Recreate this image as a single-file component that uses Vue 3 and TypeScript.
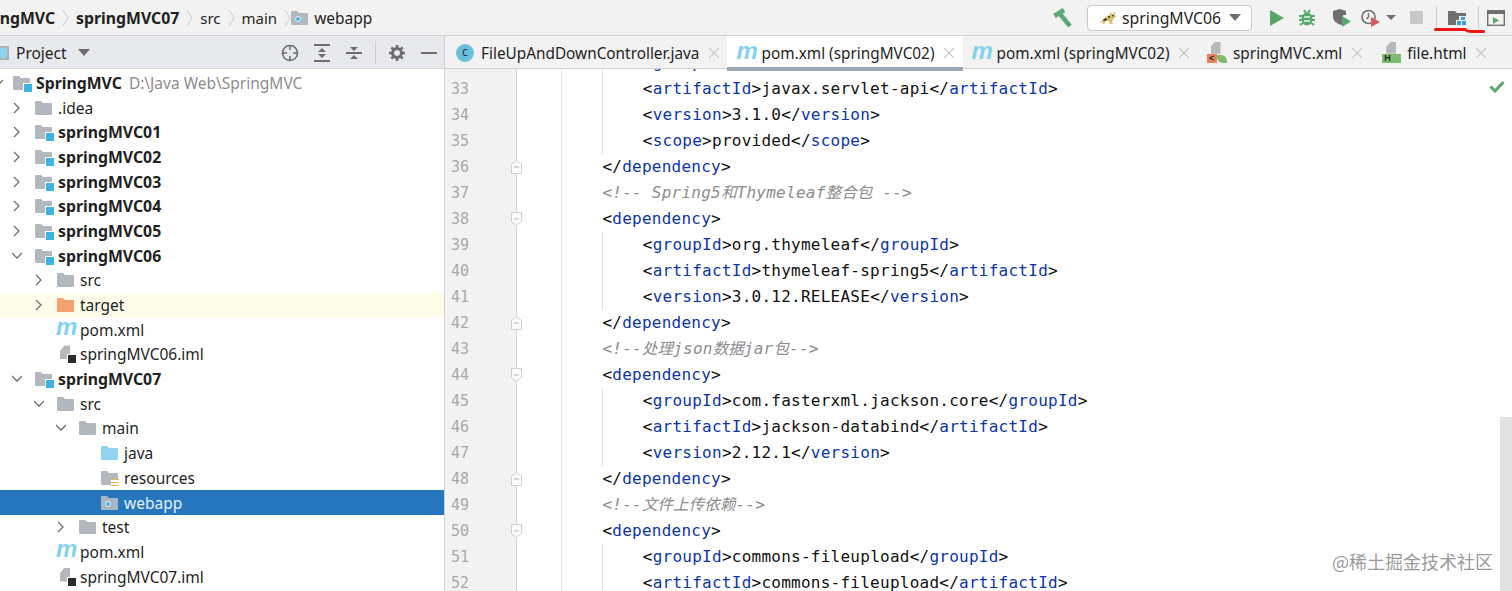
<template>
  <div class="ide">
    <svg class="defs" aria-hidden="true">
      <symbol id="folder" viewBox="0 0 17 14"><path d="M0 1a1 1 0 0 1 1-1h5l2 2h8a1 1 0 0 1 1 1v10a1 1 0 0 1-1 1H1a1 1 0 0 1-1-1z" fill="currentColor" /></symbol>
      <symbol id="chevron" viewBox="0 0 7 18"><path d="M1 1l5 8-5 8" fill="none" stroke="#cdcdcd" stroke-width="1" /></symbol>
    </svg>

    <header class="navbar">
      <nav class="crumbs">
        <span class="crumb first"><b>springMVC</b></span><svg class="sep"><use href="#chevron" /></svg>
        <span class="crumb"><b>springMVC07</b></span><svg class="sep"><use href="#chevron" /></svg>
        <span class="crumb">src</span><svg class="sep"><use href="#chevron" /></svg>
        <span class="crumb">main</span><svg class="sep"><use href="#chevron" /></svg>
        <span class="crumb with-icon">
          <span class="ficon crumb-folder"><svg width="17" height="14"><use href="#folder" /></svg><i class="dot" /></span>
          webapp
        </span>
      </nav>
      <div class="actions">
        <svg class="hammer" width="20" height="20" viewBox="0 0 20 20"><path d="M1.500 8 11 2" stroke="#5fa873" stroke-width="5" fill="none" /><path d="M7 6l10 12" stroke="#5fa873" stroke-width="4.500" fill="none" /></svg>
        <div class="run-config">
          <svg width="18" height="14" viewBox="0 0 18 14"><path d="M0 13 4 8l4-3 3-1 0-3 2 2 3-2 0 3 1 2-3 2-1 3 1 2-3 0-1-3-3 0-2 3-2-1 1-2z" fill="#d9bf6a" /><path d="M4 9l3-2 1 2-3 1zM9 5l2 0-1 3zM13 4l2 0-1 2z" fill="#2b2b2b" /></svg>
          <span>springMVC06</span>
          <i class="caret" />
        </div>
        <svg class="tool play" width="14" height="16" viewBox="0 0 14 16"><path d="M0 0 14 8 0 16z" fill="#59a869" /></svg>
        <svg class="tool bug" width="18" height="18" viewBox="0 0 18 18"><g stroke="#59a869" stroke-width="2" fill="none"><path d="M1 7h16M1 11h16M2 16l3-2M16 16l-3-2M6 1l2 3M12 1l-2 3" /></g><ellipse cx="9" cy="10" rx="5.500" ry="6.500" fill="#59a869" /><path d="M6 8h6M6 12h6" stroke="#e8f3ea" stroke-width="1.500" /></svg>
        <svg class="tool cover" width="20" height="18" viewBox="0 0 20 18"><path d="M1 2 8 0l6 2v4l-3 0v9l-2 1C4 14 1 12 1 7z" fill="#6e6e6e" /><path d="M10 7l9 5.500-9 5.500z" fill="#59a869" /></svg>
        <svg class="tool prof" width="20" height="18" viewBox="0 0 20 18"><circle cx="7.500" cy="8" r="6.500" fill="none" stroke="#6e6e6e" stroke-width="1.600" /><path d="M7.500 4v4l-2 2" fill="none" stroke="#6e6e6e" stroke-width="1.400" /><path d="M10 8l9 5-9 5z" fill="#db5860" /></svg>
        <i class="caret small" />
        <span class="stop" />
        <i class="tool-sep first-sep" />
        <span class="ps-wrap">
          <svg width="19" height="16" viewBox="0 0 19 16"><path d="M0 1h7l2 2h9v3h-7v4H8v5H0z" fill="#6e6e6e" /><path d="M13 7h4v3h-4zM9 11h4v4H9zM14 11h4v4h-4z" fill="#389fd6" /></svg>
          <svg class="mark" width="51" height="7" viewBox="0 0 51 7"><path d="M1.500 2.500H31Q33 4.500 37 4.500H49.500" fill="none" stroke="#f01414" stroke-width="3" stroke-linecap="round" /></svg>
        </span>
        <i class="tool-sep" />
        <svg class="tool panel" width="18" height="16" viewBox="0 0 18 16"><rect x=".7" y=".7" width="16.600" height="14.600" fill="none" stroke="#6e6e6e" stroke-width="1.400" /><path d="M1 1h16v3H1z" fill="#6e6e6e" /><path d="M6 7l6 3.500L6 14z" fill="#59a869" /></svg>
      </div>
    </header>

    <main class="body">
      <aside class="project">
        <div class="project-head">
          <div class="project-title">
            <i class="view-icon" />
            <span>Project</span>
            <i class="caret" />
          </div>
          <div class="project-tools">
            <svg class="locate" width="18" height="18" viewBox="0 0 18 18"><circle cx="9" cy="9" r="7.500" fill="none" stroke="#6e6e6e" stroke-width="1.600" /><path d="M9 1v5M9 12v5M1 9h5M12 9h5" stroke="#6e6e6e" stroke-width="1.600" /></svg>
            <svg width="16" height="18" viewBox="0 0 16 18"><path d="M0 1h16M0 17h16" stroke="#6e6e6e" stroke-width="2" /><path d="M8 4l4 4H4zM8 14l4-4H4z" fill="#6e6e6e" /></svg>
            <svg width="16" height="18" viewBox="0 0 16 18"><path d="M0 9h16" stroke="#6e6e6e" stroke-width="2" /><path d="M8 7 4 3h8zM8 11l4 4H4z" fill="#6e6e6e" /></svg>
            <i class="tool-sep head-sep" />
            <svg width="16" height="16" viewBox="0 0 16 16"><circle cx="8" cy="8" r="4.500" fill="none" stroke="#6e6e6e" stroke-width="3" /><path d="M8 0v3M8 13v3M0 8h3M13 8h3M2.300 2.300l2 2M11.700 11.700l2 2M13.700 2.300l-2 2M4.300 11.700l-2 2" stroke="#6e6e6e" stroke-width="2.600" /></svg>
            <svg width="16" height="16" viewBox="0 0 16 16"><path d="M0 8h16" stroke="#6e6e6e" stroke-width="2" /></svg>
          </div>
        </div>
        <ul class="tree">
          <li
            v-for="node in tree"
            :key="node.id"
            class="node"
            :class="{ selected: node.selected, ignored: node.kind === 'target' }"
          >
            <span class="arrow" :style="{ marginLeft: 10 + node.depth * 22 + 'px' }">
              <svg v-if="node.open !== undefined" width="10" height="12" viewBox="0 0 10 12">
                <path :d="node.open ? 'M0 3l5 5 5-5' : 'M2 1l5 5-5 5'" fill="none" stroke="#6e6e6e" stroke-width="1.300" />
              </svg>
            </span>
            <span class="ficon" :class="node.kind">
              <template v-if="node.kind === 'pom'"><em class="m">m</em></template>
              <template v-else-if="node.kind === 'iml'"><i class="doc" /><i class="blk" /></template>
              <template v-else>
                <svg width="17" height="14"><use href="#folder" /></svg>
                <i v-if="node.kind === 'module'" class="square" />
                <i v-if="node.kind === 'web'" class="dot" />
                <i v-if="node.kind === 'res'" class="lines" />
              </template>
            </span>
            <span class="label" :class="{ strong: node.kind === 'module' }">{{ node.name }}</span>
            <span v-if="node.path" class="path">{{ node.path }}</span>
          </li>
        </ul>
      </aside>

      <section class="editor">
        <div class="tabs">
          <div v-for="tab in tabs" :key="tab.id" class="tab" :class="{ active: tab.active }">
            <span class="tab-icon" :class="tab.icon">
              <template v-if="tab.icon === 'pom'"><em class="m">m</em></template>
              <template v-else-if="tab.icon === 'cls'">c</template>
              <template v-else-if="tab.icon === 'spring'"><i class="doc" /><i class="band">&lt;</i><i class="leaf" /></template>
              <template v-else><i class="doc" /><i class="band green">H</i></template>
            </span>
            <span>{{ tab.title }}</span>
            <svg class="close" width="10" height="10" viewBox="0 0 10 10"><path d="M0 0l10 10M10 0 0 10" stroke="#c4c4c4" stroke-width="1.200" /></svg>
          </div>
        </div>
        <div class="code">
          <div v-for="line in lines" :key="line.no" class="line">
            <span class="no">{{ line.no }}</span>
            <span class="fold">
              <svg v-if="line.fold" class="fold-mark" width="11" height="14" viewBox="0 0 11 14">
                <path :d="line.fold === 'start' ? 'M.5.5h10v9L5.500 13.500.5 9.500z' : 'M.5 4.500 5.500.5l5 4v9H.5z'" fill="#fafafa" stroke="#cfcfcf" />
                <path d="M3 7h5" stroke="#b5b5b5" />
              </svg>
            </span>
            <span class="src" :class="{ guided: line.guide }" :style="{ paddingLeft: line.indent * 40.4 + 'px' }">
              <span v-for="(tok, i) in line.tokens" :key="i" :class="tok.cls">{{ tok.text }}</span>
            </span>
          </div>
          <svg class="ok" width="16" height="13" viewBox="0 0 16 13"><path d="M1.500 6.500 6 11 14.500 2" fill="none" stroke="#59a869" stroke-width="3" /></svg>
          <div class="thumb" />
          <div class="watermark">@稀土掘金技术社区</div>
        </div>
      </section>
    </main>
  </div>
</template>

<script setup lang="ts">
type Kind = 'module' | 'dir' | 'target' | 'java' | 'res' | 'web' | 'pom' | 'iml'

interface TreeNode {
  id: number
  name: string
  depth: number
  kind: Kind
  open?: boolean
  path?: string
  selected?: boolean
}

const rows: Omit<TreeNode, 'id'>[] = [
  { name: 'SpringMVC', depth: -1, kind: 'module', open: true, path: 'D:\\Java Web\\SpringMVC' },
  { name: '.idea', depth: 0, kind: 'dir', open: false },
  { name: 'springMVC01', depth: 0, kind: 'module', open: false },
  { name: 'springMVC02', depth: 0, kind: 'module', open: false },
  { name: 'springMVC03', depth: 0, kind: 'module', open: false },
  { name: 'springMVC04', depth: 0, kind: 'module', open: false },
  { name: 'springMVC05', depth: 0, kind: 'module', open: false },
  { name: 'springMVC06', depth: 0, kind: 'module', open: true },
  { name: 'src', depth: 1, kind: 'dir', open: false },
  { name: 'target', depth: 1, kind: 'target', open: false },
  { name: 'pom.xml', depth: 1, kind: 'pom' },
  { name: 'springMVC06.iml', depth: 1, kind: 'iml' },
  { name: 'springMVC07', depth: 0, kind: 'module', open: true },
  { name: 'src', depth: 1, kind: 'dir', open: true },
  { name: 'main', depth: 2, kind: 'dir', open: true },
  { name: 'java', depth: 3, kind: 'java' },
  { name: 'resources', depth: 3, kind: 'res' },
  { name: 'webapp', depth: 3, kind: 'web', selected: true },
  { name: 'test', depth: 2, kind: 'dir', open: false },
  { name: 'pom.xml', depth: 1, kind: 'pom' },
  { name: 'springMVC07.iml', depth: 1, kind: 'iml' },
]
const tree: TreeNode[] = rows.map((r, id) => ({ ...r, id }))

const tabs = [
  { id: 1, title: 'FileUpAndDownController.java', icon: 'cls' },
  { id: 2, title: 'pom.xml (springMVC02)', icon: 'pom', active: true },
  { id: 3, title: 'pom.xml (springMVC02)', icon: 'pom' },
  { id: 4, title: 'springMVC.xml', icon: 'spring' },
  { id: 5, title: 'file.html', icon: 'html' },
]

const source: [string, number, string?, boolean?][] = [
  ['<groupId>javax.servlet</groupId>', 2, undefined, true],
  ['<artifactId>javax.servlet-api</artifactId>', 2, undefined, true],
  ['<version>3.1.0</version>', 2, undefined, true],
  ['<scope>provided</scope>', 2, undefined, true],
  ['</dependency>', 1, 'end'],
  ['<!-- Spring5和Thymeleaf整合包 -->', 1],
  ['<dependency>', 1, 'start'],
  ['<groupId>org.thymeleaf</groupId>', 2, undefined, true],
  ['<artifactId>thymeleaf-spring5</artifactId>', 2, undefined, true],
  ['<version>3.0.12.RELEASE</version>', 2, undefined, true],
  ['</dependency>', 1, 'end'],
  ['<!--处理json数据jar包-->', 1],
  ['<dependency>', 1, 'start'],
  ['<groupId>com.fasterxml.jackson.core</groupId>', 2, undefined, true],
  ['<artifactId>jackson-databind</artifactId>', 2, undefined, true],
  ['<version>2.12.1</version>', 2, undefined, true],
  ['</dependency>', 1, 'end'],
  ['<!--文件上传依赖-->', 1],
  ['<dependency>', 1, 'start'],
  ['<groupId>commons-fileupload</groupId>', 2, undefined, true],
  ['<artifactId>commons-fileupload</artifactId>', 2, undefined, true],
]

// 把一行 xml 切成带颜色的片段
const tokenize = (text: string) => {
  if (text.startsWith('<!--')) {
    return text
      .split(/([\u4e00-\u9fff]+)/)
      .filter(Boolean)
      .map(part => ({ text: part, cls: /[\u4e00-\u9fff]/.test(part) ? 'comment cjk' : 'comment' }))
  }
  return text
    .split(/(<\/?|>)/)
    .filter(Boolean)
    .map((part, i, all) => {
      if (part === '<' || part === '</' || part === '>') return { text: part, cls: 'plain' }
      const prev = all[i - 1]
      return { text: part, cls: prev === '<' || prev === '</' ? 'tag' : 'plain' }
    })
}

const lines = source.map(([text, indent, fold, guide], i) => ({
  no: 32 + i,
  indent,
  fold,
  guide,
  tokens: tokenize(text),
}))
</script>

<style scoped>
.ide {
  width: 1512px;
  height: 591px;
  overflow: hidden;
  display: flex;
  flex-direction: column;
  background: #fff;
  color: #1f1f1f;
  font-family: "Noto Sans", "Noto Sans CJK SC", sans-serif;
  font-size: 15.500px;
}
.defs {
  position: absolute;
  width: 0;
  height: 0;
}
i {
  font-style: normal;
}
b,
.label.strong {
  font-weight: 700;
  font-size: 15.800px;
}

/* top bar */
.navbar {
  height: 36px;
  flex: none;
  display: flex;
  align-items: center;
  justify-content: space-between;
  background: #f2f2f2;
  border-bottom: 1px solid #d1d1d1;
  box-sizing: border-box;
}
.crumbs {
  display: flex;
  align-items: center;
  font-size: 15px;
}
.crumb {
  display: flex;
  align-items: center;
  white-space: nowrap;
}
.crumb.first {
  margin-left: -30px;
}
.crumb.with-icon {
  margin-left: -7px;
  font-size: 15.500px;
}
.sep {
  width: 7px;
  height: 18px;
  margin: 0 7px;
}
.crumb-folder {
  margin-right: 5px;
  color: #a7b6c2;
}
.actions {
  display: flex;
  align-items: center;
  padding-right: 7px;
}
.hammer {
  margin-right: 14px;
}
.run-config {
  width: 165px;
  height: 26px;
  box-sizing: border-box;
  display: flex;
  align-items: center;
  padding-left: 11px;
  gap: 5px;
  background: #fff;
  border: 1px solid #c9c9c9;
  border-radius: 4px;
  margin-right: 18px;
  font-size: 15.800px;
}
.caret {
  width: 0;
  height: 0;
  border-left: 6px solid transparent;
  border-right: 6px solid transparent;
  border-top: 7px solid #6e6e6e;
  margin-left: 3px;
}
.caret.small {
  border-left-width: 5px;
  border-right-width: 5px;
  border-top-width: 5px;
  margin-left: 5px;
  margin-right: 14px;
}
.tool.play {
  margin-right: 14px;
}
.tool.bug {
  margin-right: 16px;
}
.tool.cover {
  margin-right: 9px;
}
.stop {
  width: 13px;
  height: 13px;
  background: #c8c8c8;
  margin-right: 13px;
}
.tool-sep {
  width: 1px;
  height: 23px;
  background: #cfcfcf;
}
.ps-wrap {
  position: relative;
  display: flex;
  margin: 0 11px;
}
.mark {
  position: absolute;
  left: -14px;
  top: 17px;
}
.tool.panel {
  margin-left: 8px;
}

.body {
  flex: 1;
  min-height: 0;
  display: flex;
}

/* project panel */
.project {
  width: 445px;
  flex: none;
  border-right: 1px solid #d1d1d1;
  box-sizing: border-box;
  overflow: hidden;
}
.project-head {
  height: 33px;
  padding-top: 1px;
  box-sizing: border-box;
  display: flex;
  align-items: center;
  justify-content: space-between;
  background: #e7e9ed;
  border-bottom: 1px solid #dcdcdc;
}
.project-title {
  display: flex;
  align-items: center;
  gap: 7px;
}
.view-icon {
  width: 9px;
  height: 14px;
  background: #8fd3ef;
  border-top: 2px solid #aeb3ba;
  border-right: 2px solid #aeb3ba;
  border-bottom: 2px solid #aeb3ba;
  box-sizing: border-box;
}
.project-title .caret {
  margin-left: 4px;
}
.project-tools {
  display: flex;
  align-items: center;
  gap: 16px;
  padding-right: 7px;
}
.locate {
  margin-right: -1px;
}
.head-sep {
  margin: 0 -3px;
}
.tree {
  list-style: none;
  margin: 0;
  padding: 1.500px 0 0;
}
.node {
  height: 24.700px;
  display: flex;
  align-items: center;
  white-space: nowrap;
}
.node:first-child .arrow svg {
  transform: translateX(3px);
}
.node.ignored {
  background: #fdfde9;
}
.node.selected {
  background: #2675bf;
  color: #e9f2fa;
}
.arrow {
  width: 14px;
  flex: none;
  display: flex;
  justify-content: center;
  margin-right: 11px;
}
.ficon {
  position: relative;
  width: 17px;
  height: 14px;
  flex: none;
  margin-right: 6px;
  color: #b3b8be;
  display: block;
}
.ficon svg {
  display: block;
}
.ficon.target {
  color: #f5a26f;
}
.ficon.java {
  color: #8fd3ef;
}
.ficon.web {
  color: #a7b6c2;
}
.square {
  position: absolute;
  right: -2px;
  bottom: -2px;
  width: 8px;
  height: 8px;
  background: #3db3e4;
  border-left: 1px solid #fff;
  border-top: 1px solid #fff;
}
.dot {
  position: absolute;
  left: 4px;
  top: 5px;
  width: 6px;
  height: 6px;
  border-radius: 50%;
  background: #3db3e4;
  border: 1px solid #e9f2fa;
  box-sizing: border-box;
}
.lines {
  position: absolute;
  right: -1px;
  bottom: -3px;
  width: 8px;
  height: 9px;
  background: repeating-linear-gradient(#e5b85c 0 1.500px, #fff 1.500px 3px);
}
.m {
  position: absolute;
  left: -1px;
  top: -8px;
  font: italic bold 24px/1 "Liberation Sans", sans-serif;
  color: #84d2ef;
}
.doc {
  position: absolute;
  left: 3px;
  top: -2px;
  width: 10px;
  height: 14px;
  background: #b5b8bc;
  clip-path: polygon(45% 0, 100% 0, 100% 100%, 0 100%, 0 40%);
}
.blk {
  position: absolute;
  left: 10px;
  top: 7px;
  width: 8px;
  height: 8px;
  background: #2b2b2b;
  border: 1px solid #fff;
}
.label {
  margin-right: 7px;
}
.path {
  color: #8c8c8c;
}

/* editor */
.editor {
  flex: 1;
  min-width: 0;
  display: flex;
  flex-direction: column;
}
.tabs {
  height: 33px;
  flex: none;
  display: flex;
  padding-left: 2px;
  background: #f2f2f2;
  border-bottom: 1px solid #d1d1d1;
  box-sizing: border-box;
  position: relative;
  z-index: 1;
  font-size: 15.350px;
}
.tab {
  display: flex;
  align-items: center;
  padding: 1.500px 8.500px 0 9px;
  white-space: nowrap;
  box-sizing: border-box;
}
.tab.active {
  height: 35px;
  padding-bottom: 3px;
  background: #fff;
  box-shadow: inset 0 -4px 0 #9aa7b5;
}
.tab-icon {
  position: relative;
  width: 18px;
  height: 16px;
  flex: none;
  margin-right: 7px;
}
.tab-icon.spring {
  margin-right: 8.500px;
}
.tab-icon.html {
  margin-left: 3px;
}
.tab-icon.cls {
  background: #6cbfdc;
  border-radius: 50%;
  height: 18px;
  color: #20363f;
  font-size: 12px;
  line-height: 16px;
  text-align: center;
}
.tab-icon .m {
  left: 0;
  top: -6px;
}
.tab-icon .doc {
  left: 4px;
  top: -3px;
  height: 12px;
}
.band {
  position: absolute;
  left: 0;
  bottom: -2px;
  width: 10px;
  height: 9px;
  background: #e8825a;
  font: bold 9px/9px "Liberation Sans", sans-serif;
  color: #222;
  text-align: center;
}
.band.green {
  width: 19px;
  background: #7dbb6e;
  text-align: left;
  padding-left: 2px;
  box-sizing: border-box;
}
.leaf {
  position: absolute;
  left: 10px;
  bottom: -2px;
  width: 10px;
  height: 8px;
  background: #7dbb6e;
  border-radius: 0 6px 0 6px;
}
.close {
  margin-left: 9.500px;
}
.code {
  flex: 1;
  min-height: 0;
  position: relative;
  overflow: hidden;
  font-family: "DejaVu Sans Mono", "Noto Sans CJK SC", monospace;
  font-size: 16px;
  letter-spacing: 0.250px;
}
.line:first-child {
  margin-top: -19px;
}
.line {
  display: flex;
  height: 26px;
  line-height: 26px;
  white-space: pre;
}
.no {
  width: 71px;
  flex: none;
  box-sizing: border-box;
  padding-left: 6px;
  background: #f2f2f2;
  color: #a8a8a8;
  font-size: 15px;
  letter-spacing: 0;
}
.fold {
  position: relative;
  width: 46px;
  flex: none;
  border-left: 1.500px solid #d6d6d6;
  border-right: 1px solid #e3e3e3;
  box-sizing: border-box;
}
.fold-mark {
  position: absolute;
  left: -6px;
  top: 6px;
}
.src {
  position: relative;
}
.guided::before {
  content: "";
  position: absolute;
  left: 40px;
  top: 0;
  bottom: 0;
  width: 1px;
  background: #e3e3e3;
}
.tag {
  color: #0b35a8;
}
.plain {
  color: #111;
}
.comment {
  color: #8c8c8c;
  font-style: italic;
}
.cjk {
  font-size: 15.600px;
  letter-spacing: 0;
}
.ok {
  position: absolute;
  right: 7px;
  top: 11px;
}
.thumb {
  position: absolute;
  right: 0;
  top: 348px;
  bottom: 0;
  width: 12px;
  background: #e2e2e2;
}
.watermark {
  position: absolute;
  right: 19px;
  bottom: 18px;
  font-family: "Noto Sans CJK SC", sans-serif;
  font-size: 18px;
  letter-spacing: 0;
  line-height: 24px;
  color: #9a9a9a;
  background: rgba(255, 255, 255, 0.6);
}
</style>

<style>
html,
body {
  margin: 0;
  overflow: hidden;
}
</style>
